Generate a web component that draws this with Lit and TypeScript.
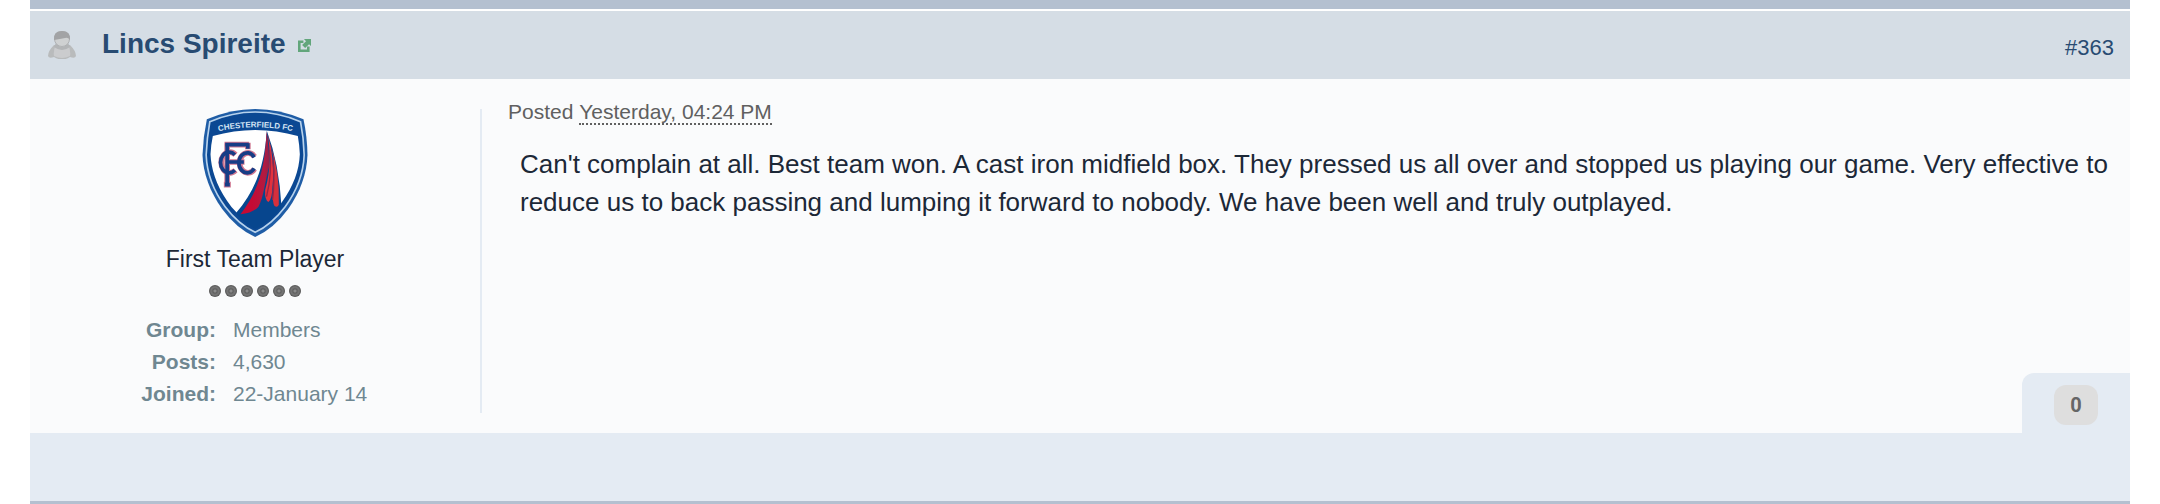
import { LitElement, html, svg, css } from "lit";
import { customElement } from "lit/decorators.js";

const crest = svg`
  <svg class="crest" viewBox="36 27 315 384" role="img" aria-label="Chesterfield FC">
    <defs>
      <path id="arc" d="M82 94 Q194 70 308 94" />
      <linearGradient id="spire" gradientUnits="userSpaceOnUse" x1="185" y1="0" x2="246" y2="0">
        <stop offset="0" stop-color="#c60a34" />
        <stop offset="0.6" stop-color="#b31a40" />
        <stop offset="1" stop-color="#7a2452" />
      </linearGradient>
    </defs>
    <path d="M49 58 Q194 -4 339 58 Q350 110 351 165 C349 220 330 275 293 327 Q250 386 194 411 Q138 386 95 327 C58 275 38 220 36 165 Q38 110 49 58Z" fill="#1f5da6" />
    <path d="M58 65 Q194 7 330 65 Q340 115 341 165 C339 217 321 270 284 320 Q244 373 194 397 Q144 373 104 320 C67 270 49 217 47 165 Q49 115 58 65Z" fill="#0b4893" stroke="#b7d2ec" stroke-width="5" />
    <path d="M67 108 Q194 72 322 108 Q327 136 328 163 C326 212 308 260 275 305 L257 331 L142 341 Q122 323 110 303 C76 254 62 206 60 163 Q61 136 67 108Z" fill="#fff" />
    <text class="motto"><textPath href="#arc" startOffset="50%" text-anchor="middle">CHESTERFIELD FC</textPath></text>
    <path d="M229 92 C222 190 200 265 136 340 Q160 370 194 387 Q240 366 273 320 Q266 190 229 92Z" fill="#07468e" />
    <path d="M228 94 C224 200 206 270 150 343 Q188 338 204 320 C220 290 222 250 236 200 Q236 140 228 94Z" fill="url(#spire)" />
    <path d="M231 100 C240 150 242 210 224 270 Q222 300 234 306 Q245 296 246 260 Q252 210 241 140Z" fill="#e3313d" />
    <path d="M240 130 C256 190 252 230 247 270 Q245 306 252 318 Q261 324 265 314 Q268 220 240 130Z" fill="#d6303c" />
    <path d="M237 150 Q246 220 228 290 M247 180 Q254 240 246 300" fill="none" stroke="#982446" stroke-width="4" />
    <g fill="none" stroke="#cf7791" stroke-width="17">
      <path d="M102 134 H176 M110 130 V258 M100 254 H121 M110 186 H162 M172 128 V148" />
      <path d="M135 164 A26 31 0 1 0 135 211 M192 170 A25 30 0 1 0 192 207" />
    </g>
    <g fill="none" stroke="#173d86" stroke-width="11">
      <path d="M104 134 H174 M110 130 V256 M103 254 H118 M110 186 H160 M172 130 V146" />
      <path d="M133 164 A26 31 0 1 0 133 211 M191 172 A25 30 0 1 0 191 205" />
    </g>
  </svg>`;

const person = svg`
  <svg class="person" viewBox="0 0 28 28" role="img" aria-label="Offline">
    <path d="M6 14 L22 14 Q28 20 28 25 Q27 28 22 26 Q14 31 6 26 Q1 28 0 25 Q0 20 6 14Z" fill="#b9bbbc" />
    <path d="M8 13 L20 13 Q23 20 22 25 Q14 29 6 25 Q5 20 8 13Z" fill="#cbccce" />
    <path d="M8 12 Q14 20 20 12 L22 16 Q14 22 6 16Z" fill="#b3b5b7" />
    <ellipse cx="14" cy="8" rx="7.500" ry="7.500" fill="#cfd1d2" stroke="#b0b2b4" />
    <path d="M6 9 Q5 0 14 0 Q23 0 22 9 Q20 6 17 7 Q12 8 6 9Z" fill="#a2a3a5" />
  </svg>`;

const external = svg`
  <svg class="external" viewBox="0 0 12 12" aria-hidden="true">
    <path d="M5 2.500 H1.200 V10.800 H9.500 V7" fill="none" stroke="#62a67b" stroke-width="2.400" />
    <path d="M5.500 0 H12 V6.500 L10.200 4.800 L6.600 8.400 L3.800 5.600 L7.400 2Z" fill="#62a67b" />
  </svg>`;

@customElement("app-root")
export class AppRoot extends LitElement {
  static styles = css`
    :host {
      display: block;
      padding: 0 30px;
      background: #fff;
      color: #1c2837;
      font-family: "Liberation Sans", Arial, sans-serif;
    }
    a { color: #284b72; text-decoration: none; }
    h2, p, dl, dd { margin: 0; }
    .post { border-top: 9px solid #b4c0d0; border-bottom: 3px solid #b4c0d0; }
    .head {
      display: flex;
      align-items: center;
      height: 68px;
      margin-top: 2px;
      padding: 0 16px 0 18px;
      background: #d5dde5;
    }
    .person { width: 28px; height: 28px; margin-right: 26px; }
    .name { font-size: 28px; line-height: 32px; padding-bottom: 2px; }
    .external { display: block; width: 13px; height: 13px; margin-left: 12px; }
    .number { margin-left: auto; font-size: 22px; line-height: 28px; padding-top: 6px; }
    .body { display: flex; background: #fafbfc; padding-top: 30px; }
    .author {
      display: flex;
      flex-direction: column;
      align-items: center;
      width: 450px;
      margin-bottom: 20px;
      border-right: 2px solid #e4ebf3;
    }
    .crest { display: block; width: 106px; height: 128px; }
    .motto { font-size: 24px; font-weight: bold; fill: #d4e4f4; }
    .rank { margin-top: 8px; font-size: 23px; line-height: 28px; }
    .pips { display: flex; gap: 4px; margin: 12px 0 17px; }
    .pip {
      width: 12px;
      height: 12px;
      border-radius: 50%;
      background: radial-gradient(circle, #8a8a8a 0 1px, #606060 2px, #787878 4px, #505050 6px);
    }
    .facts {
      display: grid;
      grid-template-columns: 186px 1fr;
      column-gap: 17px;
      align-self: stretch;
      padding-bottom: 3px;
      font-size: 21px;
      line-height: 32px;
      color: #6f8791;
    }
    .facts dt { font-weight: bold; text-align: right; }
    .content { display: flex; flex: 1; flex-direction: column; min-width: 0; }
    .posted { padding-left: 26px; margin-top: -10px; font-size: 21px; line-height: 26px; color: #606060; }
    .posted abbr {
      display: inline-block;
      line-height: 22px;
      text-decoration: none;
      border-bottom: 2px dotted #606060;
    }
    .text { padding: 20px 10px 0 38px; font-size: 26px; line-height: 38px; }
    .rep {
      display: flex;
      align-items: center;
      justify-content: center;
      align-self: flex-end;
      box-sizing: border-box;
      width: 108px;
      height: 60px;
      margin-top: auto;
      padding-top: 4px;
      border-radius: 12px 0 0 0;
      background: #e4ebf3;
    }
    .score {
      min-width: 44px;
      border-radius: 12px;
      background: #dedede;
      color: #666;
      font-family: Roboto, "Liberation Sans", sans-serif;
      font-size: 20px;
      font-weight: bold;
      line-height: 40px;
      text-align: center;
    }
    .controls { height: 68px; background: #e4ebf3; }
  `;

  render() {
    return html`
      <article class="post">
        <header class="head">
          ${person}
          <h2 class="name"><a href="#profile">Lincs Spireite</a></h2>
          <a href="#profile" aria-label="View profile">${external}</a>
          <a class="number" href="#entry">#363</a>
        </header>
        <div class="body">
          <aside class="author">
            ${crest}
            <p class="rank">First Team Player</p>
            <div class="pips">${[1, 2, 3, 4, 5, 6].map(() => html`<span class="pip"></span>`)}</div>
            <dl class="facts">
              <dt>Group:</dt><dd>Members</dd>
              <dt>Posts:</dt><dd>4,630</dd>
              <dt>Joined:</dt><dd>22-January 14</dd>
            </dl>
          </aside>
          <div class="content">
            <p class="posted">Posted <abbr>Yesterday, 04:24 PM</abbr></p>
            <p class="text">Can't complain at all. Best team won. A cast iron midfield box. They pressed us all over and stopped us playing our game. Very effective to reduce us to back passing and lumping it forward to nobody. We have been well and truly outplayed.</p>
            <div class="rep"><span class="score">0</span></div>
          </div>
        </div>
        <div class="controls"></div>
      </article>
    `;
  }
}
